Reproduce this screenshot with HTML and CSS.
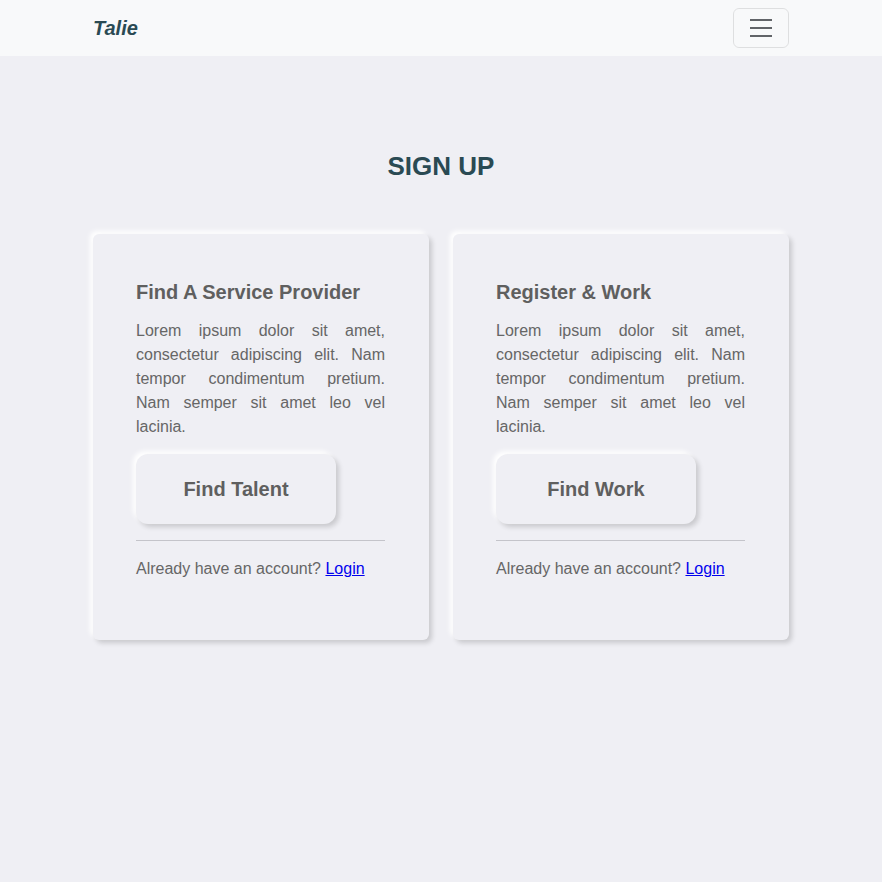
FILE: index.html
```html
<!DOCTYPE html>
<html lang="en">
<head>
<meta charset="utf-8">
<title>Talie - Sign Up</title>
<link rel="stylesheet" href="styles.css">
</head>
<body>
<nav class="navbar">
  <div class="container nav-inner">
    <a class="brand" href="#">Talie</a>
    <button class="toggler" type="button" aria-label="Toggle navigation">
      <svg width="30" height="30" viewBox="0 0 30 30"><path d="M4 7h22M4 15h22M4 23h22" stroke="rgba(33,37,41,0.7)" stroke-width="2" stroke-linecap="butt" fill="none"/></svg>
    </button>
  </div>
</nav>
<main class="container main">
  <h1 class="title">SIGN UP</h1>
  <div class="cards">
    <section class="card">
      <h2 class="card-title">Find A Service Provider</h2>
      <p class="card-text">Lorem ipsum dolor sit amet, consectetur adipiscing elit. Nam tempor condimentum pretium. Nam semper sit amet leo vel lacinia.</p>
      <button class="action" type="button">Find Talent</button>
      <hr class="divider">
      <p class="login">Already have an account? <a href="#">Login</a></p>
    </section>
    <section class="card">
      <h2 class="card-title">Register &amp; Work</h2>
      <p class="card-text">Lorem ipsum dolor sit amet, consectetur adipiscing elit. Nam tempor condimentum pretium. Nam semper sit amet leo vel lacinia.</p>
      <button class="action" type="button">Find Work</button>
      <hr class="divider">
      <p class="login">Already have an account? <a href="#">Login</a></p>
    </section>
  </div>
</main>
</body>
</html>
```

FILE: styles.css
```css
* { box-sizing: border-box; }
html, body { margin: 0; padding: 0; }
body {
  background: #efeff4;
  font-family: "Liberation Sans", Arial, sans-serif;
  color: #616161;
  font-size: 16px;
  line-height: 1.5;
  min-height: 882px;
}
.container {
  max-width: 720px;
  margin: 0 auto;
  padding: 0 12px;
}
.navbar {
  background: #f8f9fa;
  padding: 8px 0;
}
.nav-inner {
  display: flex;
  align-items: center;
  justify-content: space-between;
}
.brand {
  font-size: 20px;
  font-weight: bold;
  font-style: italic;
  color: #2a4a53;
  text-decoration: none;
  line-height: 30px;
}
.toggler {
  width: 56px;
  height: 40px;
  padding: 4px 12px;
  border: 1px solid rgba(0,0,0,0.1);
  border-radius: 6px;
  background: transparent;
  display: flex;
  align-items: center;
  justify-content: center;
}
.toggler svg { display: block; }
.main { padding-top: 95px; }
.title {
  margin: 0 0 52px;
  text-align: center;
  font-size: 26px;
  line-height: 31px;
  font-weight: bold;
  color: #2a4a53;
}
.cards {
  display: grid;
  grid-template-columns: 1fr 1fr;
  gap: 24px;
}
.card {
  background: #efeff4;
  border-radius: 6px;
  padding: 46px 44px 44px 43px;
  box-shadow: 3px 3px 5px rgba(0,0,0,0.16), -3px -3px 5px #ffffff;
}
.card-title {
  margin: 0 0 15px;
  font-size: 20px;
  line-height: 24px;
  font-weight: bold;
  color: #5f5f5f;
}
.card-text {
  margin: 0 0 15px;
  text-align: justify;
  line-height: 24px;
  color: #666;
}
.action {
  display: block;
  width: 200px;
  height: 70px;
  border: none;
  border-radius: 12px;
  background: #efeff4;
  font-family: inherit;
  font-size: 20px;
  font-weight: bold;
  color: #5f5f5f;
  box-shadow: 3px 3px 5px rgba(0,0,0,0.16), -3px -3px 5px #ffffff;
}
.divider {
  margin: 16px 0 16px;
  border: 0;
  border-top: 1px solid #c4c4ca;
}
.login {
  margin: 0 0 15px;
  line-height: 24px;
  color: #666;
}
.login a { color: #0000ee; }
```
